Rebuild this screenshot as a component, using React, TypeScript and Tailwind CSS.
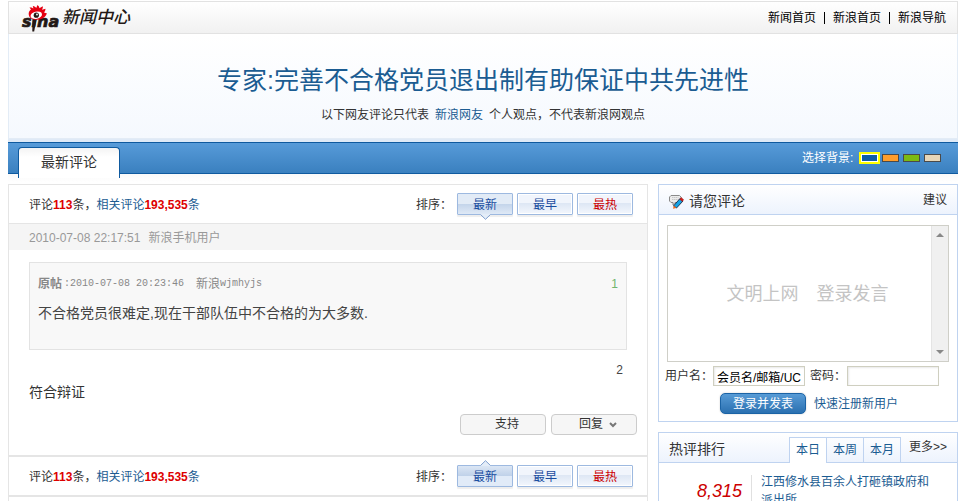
import clsx from "clsx";

const HEADER_LINKS = ["新闻首页", "新浪首页", "新浪导航"];

const SORTS = [
  { label: "最新", active: true, hot: false },
  { label: "最早", active: false, hot: false },
  { label: "最热", active: false, hot: true },
];

const SWATCHES = [
  { name: "橙色", className: "bg-[#ff9d2b]" },
  { name: "绿色", className: "bg-[#7cba14]" },
  { name: "米色", className: "bg-[#e6d6b8]" },
];

const RANK_TABS = ["本日", "本周", "本月"];

function Logo() {
  return (
    <a href="#" className="flex items-center gap-[3px]">
      <svg width="37" height="28" viewBox="0 0 37 28" className="overflow-visible">
        <text
          x="0"
          y="22.500"
          fontFamily="DejaVu Sans"
          fontWeight="bold"
          fontStyle="italic"
          fontSize="16"
          fill="#231815"
          stroke="#231815"
          strokeWidth="0.7"
        >
          sina
        </text>
        <path d="M10.500 15 L14.500 15 L12.200 27.500 L10.300 27.500 Z" fill="#231815" />
        <path
          d="M6.800 11 C6.300 8.500 7.300 6.500 9 5.500 L7.500 3.500 C9.500 3.300 10.500 3.800 11.400 4.600 L10.800 2 C12.500 2.300 13.500 3 14.200 3.900 L15.500 1 C17 2.300 17.500 3.200 17.300 4.200 L20.800 2.300 C21 4 20.500 5 20 5.800 L23.500 4.800 C23.400 6.800 22.800 7.800 22 8.500 L25 9.500 C24 10.500 24 13 20 14.800 C14.800 17 7.800 15.800 6.800 11 Z"
          fill="#e50012"
        />
        <ellipse cx="14.300" cy="11.200" rx="5.800" ry="3.600" fill="#fff" transform="rotate(-12 14.300 11.200)" />
        <circle cx="14.300" cy="11.200" r="2.600" fill="#231815" />
        <circle cx="15" cy="10.500" r="0.900" fill="#fff" />
      </svg>
      <span className="pt-px text-[17px] leading-5 font-medium text-[#231815] italic">新闻中心</span>
    </a>
  );
}

function Header() {
  return (
    <header className="flex h-[33px] items-center justify-between border border-[#e2e2e2] bg-linear-to-b from-white to-[#f1f1f1] pr-[11px] pl-[13px]">
      <Logo />
      <nav className="flex items-center gap-2 text-black">
        {HEADER_LINKS.map((label, i) => (
          <div key={label} className="flex items-center gap-2">
            {i > 0 && <span className="h-3 w-px bg-black" />}
            <a href="#">{label}</a>
          </div>
        ))}
      </nav>
    </header>
  );
}

function NavBar() {
  return (
    <div className="flex h-8 items-start justify-between border-y border-[#0f5a9f] bg-linear-to-b from-[#579bd9] to-[#3a80bf] pr-[17px] pl-[10px]">
      <a
        href="#"
        className="relative mt-1 h-[31px] w-[102px] rounded-t border border-b-0 border-[#0f5a9f] bg-linear-to-b from-[#f4f4f4] to-white to-30% text-center text-sm leading-[29px] text-[#333]"
      >
        最新评论
      </a>
      <div className="flex h-[30px] items-center text-white">
        <span className="w-[57px]">选择背景:</span>
        <button aria-label="蓝色" className="mr-0.5 h-3 w-[21px] border-2 border-[#ffff00] bg-[#ffff00]">
          <span className="block h-2 border border-white bg-[#0d5da6]" />
        </button>
        <div className="flex gap-1">
          {SWATCHES.map((s) => (
            <button
              key={s.name}
              aria-label={s.name}
              className={clsx("h-2 w-[17px] border border-[#4a4a4a]", s.className)}
            />
          ))}
        </div>
      </div>
    </div>
  );
}

function SortButton({ label, active, hot, up }: { label: string; active: boolean; hot: boolean; up?: boolean }) {
  return (
    <button
      className={clsx(
        "relative h-[22px] w-14 rounded-[1px] border border-[#9db9e0] pt-0.5 leading-[18px] shadow-[0_2px_1px_#eeeeee]",
        hot ? "text-[#c00]" : "text-[#1a4da0]",
        !active && "bg-linear-to-b from-[#f1f5fc] from-45% via-[#dde6f4] via-45% to-[#f3f7fd] inset-ring inset-ring-white",
        active && !up && "bg-linear-to-b from-[#e2ebf6] from-50% via-[#c3d4ea] via-50% to-[#dfe9f6]",
        active && up && "bg-linear-to-b from-[#dbe6f4] to-[#bfd1e9] to-50%",
      )}
    >
      {active && up && <span className="absolute inset-x-0 bottom-0 h-1/2 bg-[#e1ebf8]" />}
      <span className="relative">{label}</span>
      {active && (
        <svg
          width="11"
          height="6"
          viewBox="0 0 11 6"
          className={clsx("absolute left-[22px]", up ? "-top-[6px] rotate-180" : "-bottom-[6px]")}
        >
          <path d="M0 0 H11 L5.500 5.500 Z" fill="#e4edf8" />
          <path d="M0.500 0.500 L5.500 5.300 L10.500 0.500" fill="none" stroke="#7f9fce" />
        </svg>
      )}
    </button>
  );
}

function CountBar({ up }: { up?: boolean }) {
  return (
    <div className="flex h-[38px] items-center justify-between pr-[14px] pl-5">
      <p className="pt-0.5">
        评论<b className="text-[#d00]">113</b>条，
        <a href="#" className="text-[#1b5c92]">
          相关评论<b className="text-[#d00]">193,535</b>条
        </a>
      </p>
      <div className="flex items-center gap-1">
        <span className="w-[37px] pt-0.5">排序：</span>
        {SORTS.map((s) => (
          <SortButton key={s.label} {...s} up={up} />
        ))}
      </div>
    </div>
  );
}

function Comment() {
  return (
    <article>
      <div className="flex h-[26px] items-center gap-2 bg-[#f5f5f5] px-5 pt-0.5 text-[#999]">
        <time>2010-07-08 22:17:51</time>
        <span>新浪手机用户</span>
      </div>
      <div className="px-5 pt-3">
        <blockquote className="h-22 border border-[#e3e3e3] bg-[#f8f8f8] px-2 pt-3">
          <div className="flex items-center leading-[18px] text-[#888]">
            <b>原帖</b>
            <span className="pl-0.5 font-['Liberation_Mono'] text-[10px]">:2010-07-08 20:23:46</span>
            <span className="pl-3">新浪</span>
            <span className="font-['Liberation_Mono'] text-[10px]">wjmhyjs</span>
            <span className="ml-auto text-[#6fb56f]">1</span>
          </div>
          <p className="pt-2 text-sm leading-6 text-[#444]">不合格党员很难定,现在干部队伍中不合格的为大多数.</p>
        </blockquote>
        <div className="flex justify-end pt-3 pr-1 leading-4 text-[#444]">2</div>
        <p className="pt-[2px] text-sm leading-6">符合辩证</p>
      </div>
      <div className="flex justify-end gap-[5px] pt-[10px] pr-[10px] pb-5">
        <button className="h-[21px] w-[86px] rounded border border-[#ccc] bg-[#f6f6f6] pl-2 leading-[19px]">支持</button>
        <button className="flex h-[21px] w-[86px] items-center justify-center gap-[6px] rounded border border-[#ccc] bg-[#f6f6f6] pl-2 leading-[19px]">
          回复
          <svg width="8" height="6" viewBox="0 0 8 6">
            <path d="M1 1 L4 4 L7 1" fill="none" stroke="#777" strokeWidth="2" />
          </svg>
        </button>
      </div>
    </article>
  );
}

function PencilIcon() {
  return (
    <svg width="15" height="15" viewBox="0 0 15 15" className="mt-1">
      <path d="M2 1.500 H10.500 L12 3 V7 L10.500 8.500 H6 L4 11 V8.500 H2 L0.500 7 V3 Z" fill="#ececec" stroke="#8a8a8a" />
      <path d="M3 3.500 H9.500 M3 5.500 H9.500" stroke="#c8c8c8" strokeDasharray="1.500 0.500" />
      <path d="M4.500 12 L11 4.500 L14 7 L7.500 14 Z" fill="#16a4e6" stroke="#1b2a44" strokeWidth="0.900" />
      <path d="M10.600 5.200 L12.200 3.500 L14.700 5.700 L13.300 7.400 Z" fill="#d2201c" stroke="#8c1512" strokeWidth="0.400" />
      <path d="M4 14.800 L4.800 11.600 L7.400 13.900 Z" fill="#f26a1b" />
    </svg>
  );
}

function CommentForm() {
  return (
    <section className="border border-[#bfd3f0]">
      <div className="flex h-[30px] items-center border-b border-[#bfd3f0] bg-linear-to-b from-white to-[#edf3fd] pr-[10px] pl-[10px]">
        <PencilIcon />
        <h2 className="pt-0.5 pl-[5px] text-sm leading-5">请您评论</h2>
        <a href="#" className="ml-auto">
          建议
        </a>
      </div>
      <form className="pt-[10px]" onSubmit={(e) => e.preventDefault()}>
        <div className="mx-2 flex h-[137px] border border-[#cfcfc8]">
          <textarea
            aria-label="评论内容"
            placeholder="文明上网　登录发言"
            className="min-w-0 flex-1 resize-none overflow-hidden pt-14 pl-4 text-center text-lg leading-6 outline-none placeholder:text-[#c4c4c4]"
          />
          <div className="flex w-[17px] flex-col items-center justify-between border-l border-[#e4e4e4] bg-[#f0f0f0] py-[7px]">
            <svg width="8" height="4" viewBox="0 0 8 4">
              <path d="M0 4 L4 0 L8 4 Z" fill="#888" />
            </svg>
            <svg width="8" height="4" viewBox="0 0 8 4">
              <path d="M0 0 L4 4 L8 0 Z" fill="#888" />
            </svg>
          </div>
        </div>
        <div className="flex items-center pt-1 pl-[6px]">
          <label htmlFor="user" className="w-12 whitespace-nowrap">
            用户名：
          </label>
          <input
            id="user"
            defaultValue="会员名/邮箱/UC"
            className="h-5 w-23 border border-[#cfcfc0] px-[3px] text-black shadow-[inset_1px_1px_2px_#e8e8e8] outline-none"
          />
          <label htmlFor="pwd" className="w-[42px] pl-[5px] whitespace-nowrap">
            密码：
          </label>
          <input
            id="pwd"
            type="password"
            className="h-5 w-23 border border-[#cfcfc0] px-[3px] shadow-[inset_1px_1px_2px_#e8e8e8] outline-none"
          />
        </div>
        <div className="flex items-center gap-2 pt-[7px] pb-[7px] pl-[61px]">
          <button className="h-[21px] w-[86px] rounded-[5px] border border-[#1b63a5] bg-linear-to-b from-[#579bd6] to-[#2a70b0] leading-5 text-white shadow-[0_0_2px_#cccccc]">
            登录并发表
          </button>
          <a href="#" className="text-[#1b5c92]">
            快速注册新用户
          </a>
        </div>
      </form>
    </section>
  );
}

function HotRank() {
  return (
    <section className="border border-[#bfd3f0]">
      <div className="flex h-[30px] border-b border-[#bfd3f0] bg-linear-to-b from-white to-[#edf3fd] pr-[10px] pl-[10px]">
        <h2 className="text-sm leading-8">热评排行</h2>
        <div className="mt-1 ml-auto flex h-[26px] w-28 divide-x divide-[#bfd3f0] border border-b-0 border-[#bfd3f0] text-[#1b5c92]">
          {RANK_TABS.map((label, i) => (
            <a key={label} href="#" className={clsx("flex-1 text-center leading-[25px]", i === 0 && "bg-white")}>
              {label}
            </a>
          ))}
        </div>
        <a href="#" className="pl-2 leading-7">
          更多&gt;&gt;
        </a>
      </div>
      <ol>
        <li className="flex pt-[10px] pb-2">
          <span className="w-[83px] pt-[6px] text-right text-lg leading-6 text-[#c00] italic">8,315</span>
          <span className="mt-[2px] ml-[9px] w-px bg-[#e0e0e0]" />
          <a href="#" className="flex-1 pr-6 pl-[9px] leading-[18px] text-[#1b5c92]">
            江西修水县百余人打砸镇政府和派出所
          </a>
        </li>
      </ol>
    </section>
  );
}

export default function App() {
  return (
    <div className="min-h-screen bg-white pt-px pr-[9px] pl-2 font-['Liberation_Sans','Noto_Sans_CJK_SC',sans-serif] text-xs leading-4 text-[#333]">
      <Header />
      <div className="border-x border-b border-[#e3ecf6] bg-linear-to-b from-white to-[#f5f9fe] pt-7 pb-[15px] text-center">
        <h1 className="text-[25px] leading-9 text-[#1b5c92]">专家:完善不合格党员退出制有助保证中共先进性</h1>
        <p className="flex justify-center gap-[6px] pt-[9px]">
          <span>以下网友评论只代表</span>
          <a href="#" className="text-[#1b5c92]">
            新浪网友
          </a>
          <span>个人观点，不代表新浪网观点</span>
        </p>
      </div>
      <div className="h-[3px] bg-[#dfeaf7]" />
      <NavBar />
      <div className="flex items-start gap-[10px] bg-linear-to-b from-[#f9f9f9] to-white to-[8px] pt-[10px]">
        <main className="min-w-0 flex-1 border border-[#e5e5e5] pb-6">
          <div className="border-b border-[#e5e5e5]">
            <CountBar />
          </div>
          <Comment />
          <div className="border-y-2 border-[#e5e5e5]">
            <CountBar up />
          </div>
        </main>
        <aside className="w-[300px] shrink-0 space-y-[10px]">
          <CommentForm />
          <HotRank />
        </aside>
      </div>
    </div>
  );
}
